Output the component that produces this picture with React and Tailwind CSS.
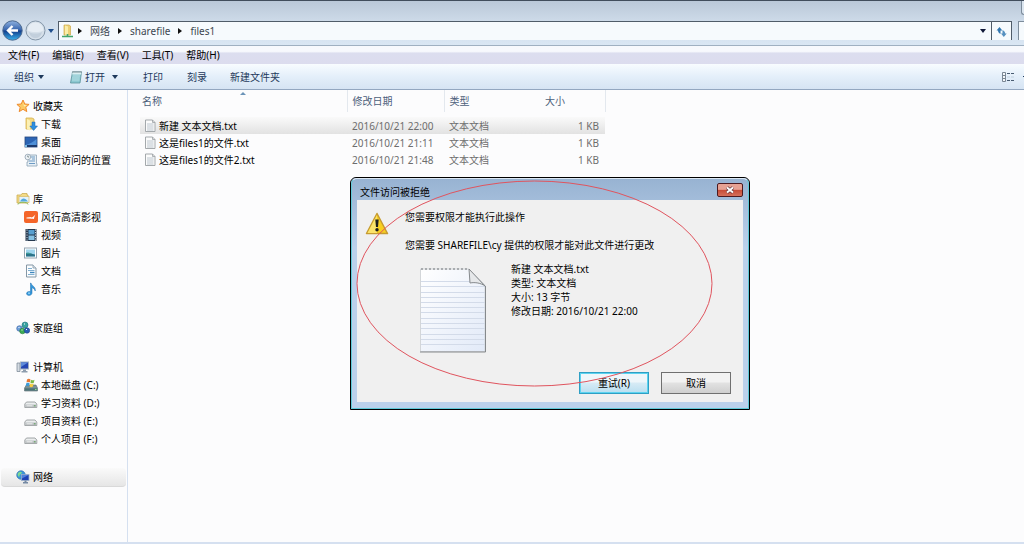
import React, { useState } from 'react';

const files = [
  { name: '新建 文本文档.txt', date: '2016/10/21 22:00', type: '文本文档', size: '1 KB' },
  { name: '这是files1的文件.txt', date: '2016/10/21 21:11', type: '文本文档', size: '1 KB' },
  { name: '这是files1的文件2.txt', date: '2016/10/21 21:48', type: '文本文档', size: '1 KB' },
];

const menus = ['文件(F)', '编辑(E)', '查看(V)', '工具(T)', '帮助(H)'];

const StarIcon = () => (
  <svg width="14" height="14" viewBox="0 0 14 14">
    <path d="M7 1l1.8 4 4.3.4-3.3 2.9 1 4.3L7 10.3l-3.8 2.3 1-4.3L.9 5.400l4.300-.4z" fill="#fcc964" stroke="#ee8a2c" strokeLinejoin="round" />
    <path d="M7 3l1 3 3 .3-3 1.200z" fill="#fff0b8" />
  </svg>
);

const DownloadIcon = () => (
  <svg width="14" height="14" viewBox="0 0 14 14">
    <path d="M2 1h6l2 1v10H2z" fill="#f3d982" stroke="#d5b04c" strokeWidth=".8" />
    <path d="M3 2l3 1.500v10L3 12z" fill="#fcf0b5" />
    <path d="M8 5h3v4h2.500L9.600 13.500 5.800 9H8z" fill="#2d8fe0" stroke="#1a67b5" strokeWidth=".5" />
  </svg>
);

const DesktopIcon = () => (
  <svg width="14" height="14" viewBox="0 0 14 14">
    <rect x="1" y="2" width="12" height="10" fill="#2c64b4" stroke="#27477d" strokeWidth=".8" />
    <path d="M1.500 10c4-1 8-3 11-6v6z" fill="#4f90d8" />
    <rect x="1" y="10" width="12" height="2" fill="#1c3a6e" />
    <rect x="1" y="10" width="2" height="2" fill="#7bc0e8" />
  </svg>
);

const RecentIcon = () => (
  <svg width="14" height="14" viewBox="0 0 14 14">
    <path d="M4 2h8.500v8.500H13V13H3V9h1z" fill="#e8f0f6" stroke="#8ba2b5" strokeWidth=".8" />
    <path d="M7 4h4M8 6h3M5 8h6M5 10.500h6" stroke="#6c9ac4" />
    <circle cx="3.800" cy="4" r="2.800" fill="#eef3f7" stroke="#8fa0ae" strokeWidth=".8" />
    <path d="M3.800 2.500V4H5" fill="none" stroke="#566" strokeWidth=".7" />
  </svg>
);

const LibraryIcon = () => (
  <svg width="14" height="14" viewBox="0 0 14 14">
    <path d="M1 3h4l1-1.500h5V3h1v8H1z" fill="#f4db86" stroke="#cdae55" strokeWidth=".8" />
    <rect x="3" y="4.500" width="10" height="6" fill="#e4f2fb" stroke="#d8b966" strokeWidth=".7" />
    <path d="M4 9.500c2-4 5-4 8 0z" fill="#54a9e0" />
    <path d="M2 12.500c0-3 10-3 10 0" fill="none" stroke="#8dbb5c" />
  </svg>
);

const FunshionIcon = () => (
  <svg width="14" height="14" viewBox="0 0 14 14">
    <rect x="0" y="1" width="14" height="12" rx="2" fill="#f4652a" />
    <path d="M2.500 8.500c3 .5 5.500-.5 9-4-1 2-1.500 3-1.500 4.500-3-.5-5 .3-7.500-.5z" fill="#fff" />
    <path d="M2.500 8l5-.5" stroke="#fff" />
  </svg>
);

const VideoIcon = () => (
  <svg width="14" height="14" viewBox="0 0 14 14">
    <rect x="1.500" y="1" width="11" height="12" fill="#26384e" />
    <path d="M4.500 2h6v4.500h-6z" fill="#579fd0" />
    <path d="M4.500 7.500h6V12h-6z" fill="#86c2e4" />
    <path d="M3 1.500v12M11.500 1.500v12" stroke="#cdd8e2" strokeDasharray="1.200 1.300" />
  </svg>
);

const PictureIcon = () => (
  <svg width="14" height="14" viewBox="0 0 14 14">
    <rect x=".5" y="2" width="12" height="10" fill="#fff" stroke="#93a4b1" />
    <rect x="2" y="3.500" width="9" height="7" fill="#9fd5ee" />
    <path d="M2 10.500V7c3-1 5 1 9 1.500v2z" fill="#2b7389" />
    <path d="M2 7.500c2-1.500 4-.5 6 .5H2z" fill="#3f9e99" />
  </svg>
);

const DocumentIcon = () => (
  <svg width="14" height="14" viewBox="0 0 14 14">
    <path d="M2.500 1h6.500l3 3v9H2.500z" fill="#fbfdff" stroke="#8597a5" />
    <path d="M9 1v3h3" fill="#dce6ee" stroke="#8597a5" strokeWidth=".8" />
    <path d="M4 4.500h4M4 6.500h6.500M4 10.500h6.500" stroke="#80afd0" />
    <path d="M6 8.500h4.500" stroke="#3f87bd" strokeWidth="1.400" />
  </svg>
);

const MusicIcon = () => (
  <svg width="14" height="14" viewBox="0 0 14 14">
    <path d="M7 1c.5 3 5 3.500 4.200 8-.6-2-2-3-3.200-3.200V11c0 3-5.500 3.200-5.500.6C2.500 9.800 5 9 6.500 9.700V1z" fill="#3296da" stroke="#1f6eae" strokeWidth=".5" />
    <circle cx="5" cy="11.300" r="1" fill="#8fd0f5" />
  </svg>
);

const HomegroupIcon = () => (
  <svg width="14" height="14" viewBox="0 0 14 14">
    <circle cx="9" cy="4" r="3" fill="#38a3a0" stroke="#26737d" strokeWidth=".6" />
    <circle cx="3.500" cy="7.500" r="2.800" fill="#6f9fdb" stroke="#355f9e" strokeWidth=".6" />
    <circle cx="6.500" cy="10" r="2.800" fill="#3cac54" stroke="#217a37" strokeWidth=".6" />
    <circle cx="11" cy="9.500" r="2.700" fill="#2c60b8" stroke="#1c428a" strokeWidth=".6" />
    <path d="M8 3h1M2.500 6.500h1M5.500 9h1M10 8.500h1" stroke="#fff" />
  </svg>
);

const ComputerIcon = () => (
  <svg width="14" height="14" viewBox="0 0 14 14">
    <path d="M1 3h3v8.500H1z" fill="#d4dbe2" stroke="#74828f" strokeWidth=".7" />
    <rect x="4.500" y="2" width="8" height="7" fill="#2546b2" stroke="#a4b1c0" />
    <path d="M5 2.500h7L5 7z" fill="#5f8cda" />
    <path d="M7 9.500h3v1.500h1.500v1.500h-6V11H7z" fill="#8e9dae" />
  </svg>
);

const SystemDriveIcon = () => (
  <svg width="14" height="14" viewBox="0 0 14 14">
    <path d="M2.500 7h9.500l1.500 3v3H.5v-3z" fill="#7b9195" stroke="#54676b" strokeWidth=".6" />
    <path d="M1 10.300h12V12.500H1z" fill="#4d7378" />
    <path d="M3 1.500c1.500-1 2.500-.7 3.500 0l-.7 3c-1-.6-2-.6-3.300 0z" fill="#e87835" />
    <path d="M7 1.800c1.200.7 2.300.7 3.500 0l-.7 3c-1.200.7-2.200.7-3.400 0z" fill="#7cb843" />
    <path d="M2.300 5.200c1.300-.6 2.300-.6 3.300 0l-.7 3c-1-.6-2-.6-3.300 0z" fill="#3b9ddb" />
    <path d="M6.200 5.600c1.200.7 2.200.7 3.400 0l-.7 3c-1.200.7-2.200.7-3.400 0z" fill="#f6cd3e" />
    <path d="M11 11.500h1.500" stroke="#8ef07e" />
  </svg>
);

const DriveIcon = () => (
  <svg width="14" height="14" viewBox="0 0 14 14">
    <path d="M2.500 6h8.500l1.800 2v3.500H.8V8z" fill="#eceeef" stroke="#8c9092" strokeWidth=".8" />
    <path d="M1.200 8.500h11.200v2.700H1.200z" fill="#b9bec0" />
    <path d="M2.500 9.800h6" stroke="#eee" />
    <path d="M10 9.800h1.500" stroke="#5da358" />
  </svg>
);

const NetworkIcon = () => (
  <svg width="14" height="14" viewBox="0 0 14 14">
    <circle cx="5" cy="5" r="4.300" fill="#3a94d8" stroke="#2869aa" strokeWidth=".6" />
    <path d="M2 3c2-2 3-1.500 4-.5C5 5 3 4 3.500 7 2 6.500 1 5 2 3z" fill="#7fdb8f" />
    <rect x="5.500" y="4.500" width="7.500" height="6" fill="#1f42b4" stroke="#9eb1ca" strokeWidth=".8" />
    <path d="M6 5h6.500L6 8.500z" fill="#517fdc" />
    <path d="M8.500 10.500h2v1.500H12v1.500H7V12h1.500z" fill="#7589a3" />
  </svg>
);

const groups = [
  {
    title: '收藏夹',
    icon: StarIcon,
    items: [
      { label: '下载', icon: DownloadIcon },
      { label: '桌面', icon: DesktopIcon },
      { label: '最近访问的位置', icon: RecentIcon },
    ],
  },
  {
    title: '库',
    icon: LibraryIcon,
    items: [
      { label: '风行高清影视', icon: FunshionIcon },
      { label: '视频', icon: VideoIcon },
      { label: '图片', icon: PictureIcon },
      { label: '文档', icon: DocumentIcon },
      { label: '音乐', icon: MusicIcon },
    ],
  },
  { title: '家庭组', icon: HomegroupIcon, items: [] },
  {
    title: '计算机',
    icon: ComputerIcon,
    items: [
      { label: '本地磁盘 (C:)', icon: SystemDriveIcon },
      { label: '学习资料 (D:)', icon: DriveIcon },
      { label: '项目资料 (E:)', icon: DriveIcon },
      { label: '个人项目 (F:)', icon: DriveIcon },
    ],
  },
  { title: '网络', icon: NetworkIcon, items: [], active: true },
];

const Caret = () => (
  <svg width="6" height="4" viewBox="0 0 6 4" className="shrink-0">
    <path d="M0 0h6L3 4z" fill="currentColor" />
  </svg>
);

const Crumb = ({ children }) => (
  <>
    <svg width="4" height="6" viewBox="0 0 4 6" className="shrink-0">
      <path d="M0 0l4 3-4 3z" fill="#111" />
    </svg>
    <button type="button" className="text-[#3c4650]">{children}</button>
  </>
);

const AddressBar = () => (
  <div className="relative flex h-[45px] items-start border-t border-[#414d5c] bg-linear-to-b from-[#bac8d8] via-[#cfdcea] to-[#dae7f4] pt-5">
    <button type="button" aria-label="最小化" className="absolute top-0 right-0 h-3.5 w-[3px] rounded-bl-sm border-b border-l border-[#7d8c9b] bg-[#dbe5ef]" />
    <div className="flex h-[19px] shrink-0 items-center pl-0.5">
      <button type="button" aria-label="后退">
        <svg width="21" height="21" viewBox="0 0 21 21">
          <defs>
            <linearGradient id="back" x1="0" y1="0" x2="0" y2="1">
              <stop offset="0" stopColor="#8fb2e0" />
              <stop offset=".48" stopColor="#3563ac" />
              <stop offset=".52" stopColor="#123d8b" />
              <stop offset="1" stopColor="#38b2ec" />
            </linearGradient>
          </defs>
          <circle cx="10.500" cy="10.500" r="9.700" fill="url(#back)" stroke="#4a688f" />
          <path d="M16 10.500H6M10.500 6L6 10.500l4.500 4.500" fill="none" stroke="#fff" strokeWidth="2.400" />
        </svg>
      </button>
      <button type="button" aria-label="前进" className="ml-0.5">
        <svg width="21" height="21" viewBox="0 0 21 21">
          <circle cx="10.500" cy="10.500" r="9.500" fill="#d5dfe9" stroke="#8496a8" />
          <path d="M2.500 10.500a8 8 0 0116 0c-5 2-11 2-16 0z" fill="#e6edf4" />
          <path d="M4 12c4 2 9 2 13 0-1 4-3 6-6.500 6S5 16 4 12z" fill="#c2cfdc" />
        </svg>
      </button>
      <button type="button" aria-label="最近浏览的位置" className="ml-0.5 flex w-2.5 items-center text-[#1f4e8c]">
        <Caret />
      </button>
    </div>
    <div className="flex h-[19px] min-w-0 flex-1 border-x border-t border-[#505c69] bg-[#f6fafd]">
      <div className="flex min-w-0 flex-1 items-center gap-2 pr-[5px] pl-0.5">
        <svg width="13" height="14" viewBox="0 0 13 14" className="-mr-1 shrink-0">
          <path d="M3 1h5l1.500 1v9H3z" fill="#ebcf75" stroke="#cfa94b" strokeWidth=".7" />
          <path d="M4 1.500l3 1v9l-3-1z" fill="#faeda8" />
          <path d="M1 12.500h11M6.500 10v3" stroke="#42a56b" strokeWidth="1.600" />
        </svg>
        <Crumb>网络</Crumb>
        <Crumb>sharefile</Crumb>
        <Crumb>files1</Crumb>
        <button type="button" aria-label="以前的位置" className="ml-auto text-[#101838]"><Caret /></button>
      </div>
      <button type="button" aria-label="刷新" className="flex w-5 items-center justify-center border-l border-[#505c69]">
        <svg width="11" height="11" viewBox="0 0 11 11">
          <path d="M4.500 8V4.500h1.800L3.500 1 .5 4.500H2C2 6 2.800 7.200 4.500 8z" fill="#3277b0" />
          <path d="M6.500 4v3.500H5L7.800 11l2.900-3.500H9.200C9.200 6 8.200 4.800 6.500 4z" fill="#5590c0" />
        </svg>
      </button>
    </div>
    <div className="ml-1.5 h-[19px] w-1.5 shrink-0 border-t border-l border-[#7d8c9b] bg-[#f6fafd]" />
  </div>
);

const MenuBar = () => (
  <nav className="flex h-[19px] items-center gap-[13px] border-t border-[#9fb0c1] bg-linear-to-b from-[#f7f9fd] from-30% via-[#dcdeef] via-40% to-[#dcdcee] pl-2 text-black">
    {menus.map((m) => (
      <button type="button" key={m}>{m}</button>
    ))}
  </nav>
);

const Toolbar = () => (
  <div className="flex h-[26px] items-center border-b border-[#93a7c0] bg-linear-to-b from-[#f8fcff] via-[#e4effa] to-[#d6e4f3] pl-3.5 text-[#1e395b]">
    <button type="button" className="flex items-center gap-1">组织 <Caret /></button>
    <button type="button" className="ml-[26px] flex items-center">
      <svg width="12" height="14" viewBox="0 0 12 14" className="mr-[3px]">
        <path d="M2.500 2h9L10 13H.5z" fill="#8dc9d1" stroke="#5b939c" strokeWidth=".8" />
        <path d="M2.500 2h9l-.4 2.500h-9z" fill="#d9eef1" />
        <path d="M3 1v2M5 1v2M7 1v2M9 1v2M11 1v2" stroke="#53656c" strokeWidth=".7" />
        <path d="M2.500 6h7.500M2 8h7.500M2 10h7.500" stroke="#c0e5ea" strokeWidth=".8" />
      </svg>
      打开
    </button>
    <button type="button" aria-label="打开方式" className="ml-[7px]"><Caret /></button>
    <button type="button" className="ml-[25px]">打印</button>
    <button type="button" className="ml-6">刻录</button>
    <button type="button" className="ml-[23px]">新建文件夹</button>
    <button type="button" aria-label="更改您的视图" className="ml-auto">
      <svg width="13" height="10" viewBox="0 0 13 10">
        <path d="M.5.500h3v9h-3zM.5 3.500h3M.5 6.500h3" fill="#f4f7fa" stroke="#7a8794" />
        <path d="M5 1.500h3M9 1.500h3M5 8.500h3M9 8.500h3" stroke="#495c72" />
        <path d="M5 5h3M9 5h3" stroke="#c4d2e0" />
      </svg>
    </button>
    <span className="ml-2 h-px w-px bg-[#1e395b]" />
  </div>
);

const Sidebar = () => (
  <aside className="flex w-32 shrink-0 flex-col gap-5 border-r border-[#d5e0f0] pt-1.5 text-black">
    {groups.map((g) => (
      <ul key={g.title}>
        <li>
          <button
            type="button"
            className={`ml-px flex h-[19px] items-center gap-[3px] pl-[15px] ${g.active ? 'w-[125px] rounded-sm border-b border-[#d9d9d9] bg-linear-to-b from-[#fafafa] to-[#e6e6e6]' : ''}`}
          >
            <g.icon />
            {g.title}
          </button>
        </li>
        {g.items.map((item) => (
          <li key={item.label}>
            <button type="button" className="flex h-[18px] items-center gap-[3px] pl-6">
              <item.icon />
              {item.label}
            </button>
          </li>
        ))}
      </ul>
    ))}
  </aside>
);

const TextFileIcon = () => (
  <svg width="12" height="13" viewBox="0 0 12 13" className="shrink-0">
    <path d="M1.500 1h7l2.500 2.500v9H1.500z" fill="#fbfbfb" stroke="#9a9fa3" strokeWidth=".9" />
    <path d="M8.500 1v2.500H11" fill="none" stroke="#9a9fa3" strokeWidth=".8" />
    <path d="M3 5h6.500M3 7h6.500M3 9h6.500M3 11h6.500" stroke="#b4c0ca" strokeWidth=".9" />
  </svg>
);

const FileList = ({ selected, onSelect }) => (
  <main className="min-w-0 flex-1 pl-3">
    <table className="w-[465px] table-fixed border-collapse text-left">
      <colgroup>
        <col className="w-[207px]" />
        <col className="w-[97px]" />
        <col className="w-[96px]" />
        <col className="w-[65px]" />
      </colgroup>
      <thead className="text-[#4c607a]">
        <tr className="h-[22px]">
          <th className="relative border-r border-[#e3e8ee] p-0 pl-0.5 font-normal">
            名称
            <svg width="6" height="3" viewBox="0 0 6 3" className="absolute top-0.5 left-[100px]">
              <path d="M0 3l3-3 3 3z" fill="#6b93b8" />
            </svg>
          </th>
          <th className="border-r border-[#e3e8ee] p-0 pl-[5px] font-normal">修改日期</th>
          <th className="p-0 pl-[5px] font-normal">类型</th>
          <th className="border-r border-[#e3e8ee] p-0 pl-[5px] font-normal">大小</th>
        </tr>
      </thead>
      <tbody className="text-[#6d6d6d]">
        <tr className="h-[5px]"><td colSpan={4} className="p-0" /></tr>
        {files.map((f, i) => (
          <tr
            key={f.name}
            onClick={() => onSelect(i)}
            className={`h-[17px] ${i === selected ? 'bg-linear-to-b from-[#fafafa] to-[#e2e2e2]' : ''}`}
          >
            <td className="p-0 pl-1 text-black">
              <div className="flex items-center gap-[3px]"><TextFileIcon />{f.name}</div>
            </td>
            <td className="p-0 pl-[5px]">{f.date}</td>
            <td className="p-0 pl-[5px]">{f.type}</td>
            <td className="p-0 pr-1.5 text-right">{f.size}</td>
          </tr>
        ))}
      </tbody>
    </table>
  </main>
);

const NotepadIcon = () => (
  <svg width="69" height="88" viewBox="0 0 69 88" className="shrink-0">
    <defs>
      <linearGradient id="paper" x1="0" y1="0" x2="1" y2="1">
        <stop offset="0" stopColor="#ffffff" />
        <stop offset="1" stopColor="#e2eaf8" />
      </linearGradient>
    </defs>
    <path d="M1.500 3H50L66 19v66.500H1.500z" fill="url(#paper)" stroke="#d3d6d9" />
    <path d="M2 15.500h49M2 20.500h64M2 26.500h64M2 31.500h64M2 36.500h64M2 41.500h64M2 46.500h64M2 52.500h64M2 57.500h64M2 62.500h64M2 68.500h64M2 73.500h64M2 78.500h64" stroke="#d3dbe9" />
    <path d="M50 3l1 14c5-1 11 0 15 3z" fill="#e6e8ea" stroke="#85898c" />
    <path d="M2 3h48" stroke="#a9acaf" strokeWidth="2" strokeDasharray="2 2" />
    <path d="M1 86h65.500V20" fill="none" stroke="#85898c" />
  </svg>
);

const AccessDeniedDialog = ({ onClose }) => (
  <div role="dialog" aria-labelledby="dialog-title" className="absolute top-[177px] left-[350px] flex w-[400px] flex-col rounded-t-md border border-black bg-[#b9d0eb] text-black">
    <div className="flex flex-col rounded-t-md border border-[#5fc9d8] border-t-[#dce8f4] bg-linear-to-b from-[#98b3d2] to-[#bbd1eb] to-30% px-[5px] pb-1.5">
      <div className="flex h-[21px] items-center justify-between pl-[3px]">
        <h1 id="dialog-title" className="pt-1">文件访问被拒绝</h1>
        <button
          type="button"
          aria-label="关闭"
          onClick={onClose}
          className="flex h-[14px] w-[26px] items-center justify-center rounded-xs border border-[#4c1a20] bg-linear-to-b from-[#e6a294] from-45% via-[#c64a36] via-50% to-[#d5705b]"
        >
          <svg width="10" height="8" viewBox="0 0 10 8">
            <path d="M2 1.500l6 5M8 1.500l-6 5" stroke="#5a3138" strokeWidth="3.400" />
            <path d="M2 1.500l6 5M8 1.500l-6 5" stroke="#fff" strokeWidth="2" />
          </svg>
        </button>
      </div>
      <div className="bg-[#f0f0f0] px-3 pt-2.5 pb-2">
        <div className="flex">
          <svg width="24" height="23" viewBox="0 0 24 23" className="mt-0.5 -ml-1 shrink-0">
            <path d="M12 1.500L22.500 21.500H1.500z" fill="#f8cf20" stroke="#c69b31" strokeLinejoin="round" strokeWidth="1.500" />
            <path d="M12 3L2.500 21H12z" fill="#fbe36b" />
            <path d="M10.300 7.500h3.400l-.7 7.500h-2z" fill="#1d1d1d" />
            <circle cx="12" cy="17.800" r="1.700" fill="#1d1d1d" />
          </svg>
          <div className="ml-4 flex flex-col gap-3.5">
            <p>您需要权限才能执行此操作</p>
            <p>您需要 SHAREFILE\cy 提供的权限才能对此文件进行更改</p>
            <div className="flex gap-[23px] pl-3.5">
              <NotepadIcon />
              <div className="-mt-1">
                <p>新建 文本文档.txt</p>
                <p>类型: 文本文档</p>
                <p>大小: 13 字节</p>
                <p>修改日期: 2016/10/21 22:00</p>
              </div>
            </div>
          </div>
        </div>
        <div className="mt-[18px] flex justify-end gap-3">
          <button type="button" className="h-[22px] w-[70px] border border-[#2f9fc4] bg-linear-to-b from-[#eef6fa] from-45% via-[#d7ebf5] via-50% to-[#b9dff0] inset-ring inset-ring-[#5cd3f0]">重试(R)</button>
          <button type="button" onClick={onClose} className="h-[22px] w-[70px] border border-[#707070] bg-linear-to-b from-[#f2f2f2] from-45% via-[#e2e2e2] via-50% to-[#cfcfcf]">取消</button>
        </div>
      </div>
    </div>
    <svg width="358" height="208" viewBox="0 0 358 208" className="pointer-events-none absolute top-0.5 left-[5px]">
      <ellipse cx="178.500" cy="103.500" rx="177.500" ry="102.500" fill="none" stroke="#e0545e" />
    </svg>
  </div>
);

export default function App() {
  const [selected, setSelected] = useState(0);
  const [dialogOpen, setDialogOpen] = useState(true);

  return (
    <div className="relative flex min-h-screen flex-col overflow-hidden bg-[#fcfcfd] font-['Noto_Sans','Noto_Sans_CJK_SC',sans-serif] text-[10px] leading-[14px] whitespace-nowrap">
      <AddressBar />
      <MenuBar />
      <Toolbar />
      <div className="flex flex-1">
        <Sidebar />
        <FileList selected={selected} onSelect={setSelected} />
      </div>
      <div className="h-0.5 bg-[#d5e0f0]" />
      {dialogOpen && <AccessDeniedDialog onClose={() => setDialogOpen(false)} />}
    </div>
  );
}
